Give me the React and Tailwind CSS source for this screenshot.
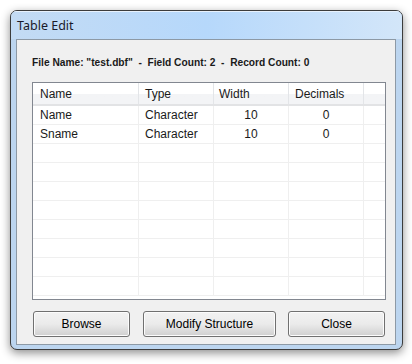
import React from 'react';

const columns = [
  { label: 'Name', width: 'w-[106px]', align: 'text-left pl-[7px]' },
  { label: 'Type', width: 'w-[75px]', align: 'text-left pl-[6px]' },
  { label: 'Width', width: 'w-[75px]', align: 'text-left pl-[5px]' },
  { label: 'Decimals', width: 'w-[75px]', align: 'text-left pl-[6px]' },
];

const records = [
  ['Name', 'Character', '10', '0'],
  ['Sname', 'Character', '10', '0'],
];

const emptyRows = 8;

const Button = ({ children, className }) => (
  <button
    type="button"
    className={`h-[26px] rounded-[3px] border border-[#707070] bg-gradient-to-b from-[#f2f2f2] via-[#ebebeb] to-[#cfcfcf] text-[12px] text-[#000] shadow-[inset_0_0_0_1px_#fcfcfc] ${className}`}
  >
    {children}
  </button>
);

const App = () => {
  return (
    <div className="w-[412px] h-[364px] bg-white p-[10px] pb-[14px] pr-[9px]" style={{ fontFamily: '"Liberation Sans", Arial, sans-serif' }}>
      <div className="flex flex-col w-[393px] h-[340px] rounded-[7px] border border-[#3c3c3c] bg-[#bcd5ef] shadow-[0_3px_10px_rgba(0,0,0,0.45)] overflow-hidden">
        {/* title bar */}
        <div className="h-[28px] shrink-0 flex items-center px-[6px] bg-gradient-to-r from-[#c3dbf4] via-[#b6d8fb] to-[#d3e6f9] shadow-[inset_0_1px_0_#e8f2fd]">
          <span className="text-[12.5px] text-[#1a1a2a] pt-[2px]" style={{ fontFamily: '"Noto Sans", "Open Sans", sans-serif' }}>
            Table Edit
          </span>
        </div>

        {/* client area */}
        <div className="flex-1 flex flex-col mx-[5px] mb-[4px] mr-[6px] border border-[#8d99a5] bg-[#f0f0f0] pl-[15px] pr-[9px]">
          <p className="pt-[15px] pb-[12px] text-[10.2px] leading-[15px] font-bold text-[#1a1a1a] whitespace-pre">
            {'File Name: "test.dbf"  -  Field Count: 2  -  Record Count: 0'}
          </p>

          <div className="h-[218px] shrink-0 border border-[#828790] bg-white overflow-hidden">
            {/* header */}
            <div className="flex h-[23px] border-b-2 border-[#e2e3e5] bg-gradient-to-b from-white from-50% to-[#f3f4f6] to-50%">
              {columns.map((c) => (
                <div key={c.label} className={`${c.width} flex items-center border-r border-[#e3e5e8] text-[12px] text-[#1a1a1a] ${c.align}`}>
                  {c.label}
                </div>
              ))}
              <div className="flex-1" />
            </div>

            {/* rows */}
            {records.map((r) => (
              <div key={r[0]} className="flex h-[19px] border-b border-[#efefef] text-[12px] text-[#1a1a1a]">
                <div className="w-[106px] pl-[7px] border-r border-[#efefef] flex items-center">{r[0]}</div>
                <div className="w-[75px] pl-[6px] border-r border-[#efefef] flex items-center">{r[1]}</div>
                <div className="w-[75px] border-r border-[#efefef] flex items-center justify-center">{r[2]}</div>
                <div className="w-[75px] border-r border-[#efefef] flex items-center justify-center">{r[3]}</div>
                <div className="flex-1" />
              </div>
            ))}
            {Array.from({ length: emptyRows }).map((_, i) => (
              <div key={i} className="flex h-[19px] border-b border-[#efefef]">
                <div className="w-[106px] border-r border-[#efefef]" />
                <div className="w-[75px] border-r border-[#efefef]" />
                <div className="w-[75px] border-r border-[#efefef]" />
                <div className="w-[75px] border-r border-[#efefef]" />
                <div className="flex-1" />
              </div>
            ))}
          </div>

          <div className="flex items-center mt-[11px] pl-[1px] pr-[1px]">
            <Button className="w-[97px]">Browse</Button>
            <Button className="w-[133px] ml-[13px]">Modify Structure</Button>
            <Button className="w-[97px] ml-auto">Close</Button>
          </div>
        </div>
      </div>
    </div>
  );
};

export default App;
